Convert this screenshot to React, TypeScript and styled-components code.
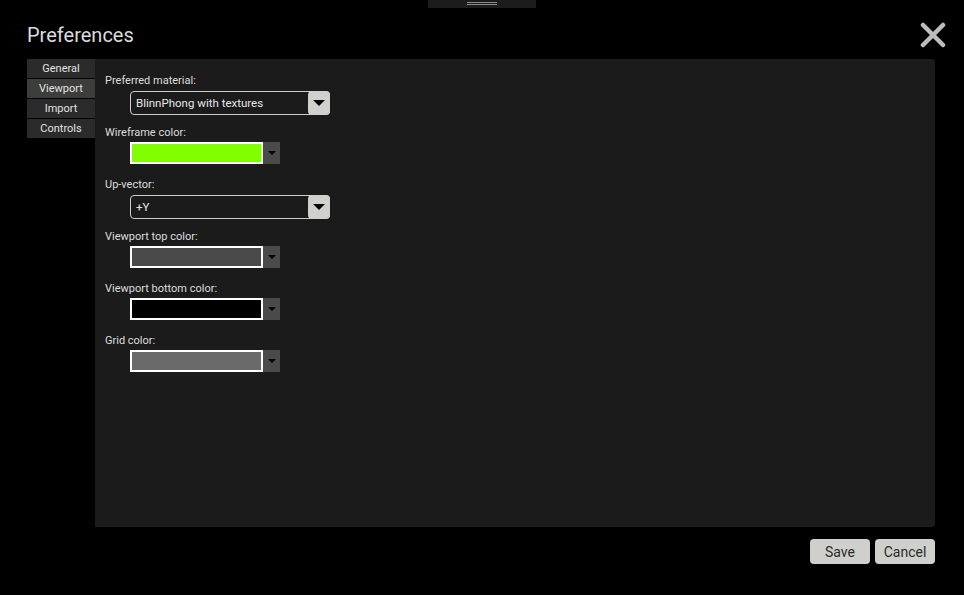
import React, { useState } from "react";
import styled, { createGlobalStyle } from "styled-components";

const GlobalStyle = createGlobalStyle`
  html, body {
    margin: 0;
    padding: 0;
    background: #000;
    font-family: Roboto, "Liberation Sans", sans-serif;
  }
  * { box-sizing: border-box; }
`;

const tabs = ["General", "Viewport", "Import", "Controls"];

type FieldDef =
  | { label: string; kind: "select"; value: string }
  | { label: string; kind: "color"; value: string };

const fields: FieldDef[] = [
  { label: "Preferred material:", kind: "select", value: "BlinnPhong with textures" },
  { label: "Wireframe color:", kind: "color", value: "#80ff00" },
  { label: "Up-vector:", kind: "select", value: "+Y" },
  { label: "Viewport top color:", kind: "color", value: "#4a4a4a" },
  { label: "Viewport bottom color:", kind: "color", value: "#000000" },
  { label: "Grid color:", kind: "color", value: "#6a6a6a" },
];

const Caret = ({ size }: { size: number }) => (
  <svg width={size} height={size / 2} viewBox="0 0 10 5">
    <path d="M0 0 L10 0 L5 5 Z" fill="#000" />
  </svg>
);

const App = () => {
  const [active, setActive] = useState("Viewport");
  return (
    <Page>
      <GlobalStyle />
      <Handle>
        <HandleLine />
        <HandleLine />
      </Handle>
      <Dialog>
        <Header>
          <Title>Preferences</Title>
          <CloseButton aria-label="close">
            <svg width="26" height="26" viewBox="0 0 26 26">
              <path d="M3 3 L23 23 M23 3 L3 23" stroke="#bdbdbd" strokeWidth="4.5" strokeLinecap="round" />
            </svg>
          </CloseButton>
        </Header>
        <Body>
          <TabList>
            {tabs.map((t) => (
              <Tab key={t} $active={t === active} onClick={() => setActive(t)}>
                {t}
              </Tab>
            ))}
          </TabList>
          <Panel>
            {fields.map((f) => (
              <Field key={f.label}>
                <Label>{f.label}</Label>
                {f.kind === "select" ? (
                  <Select>
                    <SelectText>{f.value}</SelectText>
                    <SelectButton>
                      <Caret size={12} />
                    </SelectButton>
                  </Select>
                ) : (
                  <ColorPicker>
                    <Swatch $color={f.value} />
                    <ColorToggle>
                      <Caret size={8} />
                    </ColorToggle>
                  </ColorPicker>
                )}
              </Field>
            ))}
          </Panel>
        </Body>
        <Footer>
          <Button>Save</Button>
          <Button>Cancel</Button>
        </Footer>
      </Dialog>
    </Page>
  );
};

const Page = styled.div`
  width: 964px;
  height: 595px;
  background: #000;
  display: flex;
  flex-direction: column;
  align-items: center;
`;

const Handle = styled.div`
  width: 108px;
  height: 8px;
  background: #1c1c1c;
  display: flex;
  flex-direction: column;
  align-items: center;
  gap: 1px;
  padding-top: 2px;
  margin-left: -1px;
`;

const HandleLine = styled.div`
  width: 30px;
  height: 1px;
  background: #8a8a8a;
`;

const Dialog = styled.div`
  width: 964px;
  padding: 0 29px 0 27px;
  display: flex;
  flex-direction: column;
`;

const Header = styled.div`
  height: 51px;
  display: flex;
  align-items: center;
  justify-content: space-between;
`;

const Title = styled.h1`
  margin: 0;
  font-size: 20px;
  font-weight: 400;
  color: #dcdcdc;
  padding-top: 2px;
`;

const CloseButton = styled.div`
  display: flex;
  margin-right: -11px;
  margin-top: 2px;
  cursor: pointer;
`;

const Body = styled.div`
  display: flex;
  height: 468px;
`;

const TabList = styled.div`
  width: 68px;
  display: flex;
  flex-direction: column;
  gap: 1px;
`;

const Tab = styled.div<{ $active: boolean }>`
  height: 19px;
  line-height: 20px;
  text-align: center;
  font-size: 11px;
  color: #e2e2e2;
  background: ${(p) => (p.$active ? "#3d3d3b" : "#2b2b2b")};
  cursor: pointer;
`;

const Panel = styled.div`
  flex: 1;
  background: #1b1b1b;
  border-radius: 0 3px 3px 0;
  padding: 14px 10px 12px;
  display: flex;
  flex-direction: column;
`;

const Field = styled.div`
  height: 52px;
  display: flex;
  flex-direction: column;
  gap: 2px;
`;

const Label = styled.div`
  height: 16px;
  line-height: 16px;
  font-size: 11px;
  color: #dedede;
`;

const Select = styled.div`
  margin-left: 25px;
  width: 200px;
  height: 24px;
  border: 1px solid #cfcfcf;
  border-radius: 4px;
  display: flex;
  align-items: center;
  justify-content: space-between;
`;

const SelectText = styled.span`
  font-size: 11.5px;
  color: #e8e8e8;
  padding-left: 5px;
`;

const SelectButton = styled.div`
  width: 22px;
  height: 24px;
  margin: -1px -1px -1px 0;
  background: #d0d0cc;
  border-radius: 4px;
  display: flex;
  align-items: center;
  justify-content: center;
`;

const ColorPicker = styled.div`
  margin-left: 25px;
  margin-top: -1px;
  display: flex;
  height: 22px;
`;

const Swatch = styled.div<{ $color: string }>`
  width: 133px;
  height: 22px;
  border: 2px solid #fff;
  background: ${(p) => p.$color};
`;

const ColorToggle = styled.div`
  width: 17px;
  height: 22px;
  background: #4a4a4a;
  display: flex;
  align-items: center;
  justify-content: center;
`;

const Footer = styled.div`
  display: flex;
  justify-content: flex-end;
  gap: 5px;
  padding-top: 12px;
`;

const Button = styled.button`
  width: 60px;
  height: 25px;
  border: none;
  border-radius: 4px;
  background: #cfd0cc;
  color: #2a2a2a;
  font-family: Roboto, "Liberation Sans", sans-serif;
  font-size: 14px;
  padding: 0;
  cursor: pointer;
`;

export default App;
